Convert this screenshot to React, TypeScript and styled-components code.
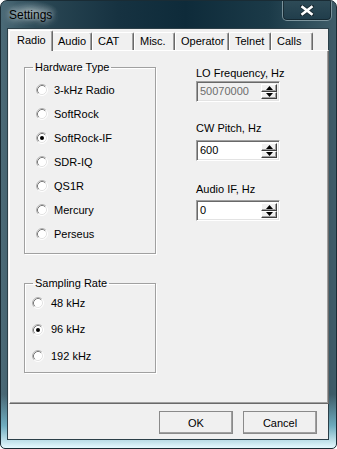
import { createGlobalStyle, styled } from "styled-components";

const GlobalStyle = createGlobalStyle`
  html, body {
    margin: 0;
    padding: 0;
    background: #ffffff;
  }
  * {
    box-sizing: border-box;
  }
`;

const Window = styled.div`
  width: 337px;
  height: 449px;
  display: flex;
  flex-direction: column;
  border: 1px solid #1a2c35;
  border-radius: 7px 7px 5px 5px;
  overflow: hidden;
  background:
    linear-gradient(
      to bottom,
      rgba(0, 0, 0, 0) 0%,
      rgba(0, 0, 0, 0) 88%,
      rgba(120, 190, 210, 0.8) 95%,
      rgba(230, 250, 255, 1) 100%
    ),
    linear-gradient(
      to right,
      #4b6a77 0%,
      #2a4754 12%,
      #163241 35%,
      #0e2b3a 55%,
      #1b3a48 80%,
      #3f5d69 100%
    );
`;

const TitleBar = styled.div`
  height: 27px;
  display: flex;
  align-items: flex-start;
  padding-left: 7px;
  padding-right: 4px;
`;

const Title = styled.div`
  padding-top: 7px;
  font-family: "Liberation Sans", Arial, sans-serif;
  font-size: 12px;
  line-height: 14px;
  color: #000;
  text-shadow:
    0 0 6px rgba(255, 255, 255, 0.8),
    0 0 10px rgba(255, 255, 255, 0.5);
  background: radial-gradient(
    ellipse at center,
    rgba(200, 215, 220, 0.45) 0%,
    rgba(200, 215, 220, 0) 70%
  );
  padding-left: 1px;
  padding-right: 6px;
`;

const CloseButton = styled.div`
  margin-left: auto;
  margin-top: -2px;
  width: 50px;
  height: 22px;
  display: flex;
  align-items: center;
  justify-content: center;
  padding-top: 2px;
  border: 1px solid rgba(190, 210, 215, 0.55);
  border-top: none;
  border-radius: 0 0 5px 5px;
  box-shadow: inset 0 0 0 1px rgba(0, 0, 0, 0.35);
  background: linear-gradient(to bottom, #2f4c58, #203d4b);
`;

const Client = styled.div`
  flex: 1;
  margin: 0 7px 8px 6px;
  background: #f0f0f0;
  border: 1px solid #2b3f48;
  display: flex;
  flex-direction: column;
`;

const TabControl = styled.div`
  margin: 0 0 0 1px;
  display: flex;
  flex-direction: column;
`;

const TabStrip = styled.div`
  height: 21px;
  display: flex;
  align-items: flex-end;
  padding-left: 1px;
  position: relative;
  z-index: 1;
`;

const Tab = styled.div<{ $w: number; $selected?: boolean }>`
  width: ${(p) => p.$w}px;
  height: ${(p) => (p.$selected ? 21 : 18)}px;
  margin-left: ${(p) => (p.$selected ? -1 : 0)}px;
  margin-right: ${(p) => (p.$selected ? -1 : 0)}px;
  margin-bottom: ${(p) => (p.$selected ? -1 : 0)}px;
  padding: ${(p) => (p.$selected ? "3px 0 0 7px" : "2px 0 0 5px")};
  font-family: "Liberation Sans", Arial, sans-serif;
  font-size: 11px;
  line-height: 13px;
  color: #000;
  background: #f0f0f0;
  border-top: 1px solid #ffffff;
  border-left: 1px solid #ffffff;
  border-right: 1px solid #696969;
  box-shadow: inset -1px 0 0 #a0a0a0;
  border-radius: 2px 2px 0 0;
  position: relative;
  z-index: ${(p) => (p.$selected ? 2 : 1)};
`;

const TabPage = styled.div`
  height: 354px;
  margin-right: -1px;
  background: #f0f0f0;
  border-top: 1px solid #ffffff;
  border-left: 1px solid #ffffff;
  border-right: 1px solid #696969;
  border-bottom: 1px solid #696969;
  box-shadow: inset -1px -1px 0 #a0a0a0;
  display: flex;
  padding: 10px 0 0 14px;
  gap: 40px;
`;

const LeftColumn = styled.div`
  width: 132px;
  display: flex;
  flex-direction: column;
  gap: 23px;
`;

const Group = styled.fieldset<{ $h: number }>`
  margin: 0;
  height: ${(p) => p.$h}px;
  padding: 0;
  border: 1px solid #a0a0a0;
  box-shadow: 1px 1px 0 #ffffff, inset 1px 1px 0 #ffffff;
`;

const Legend = styled.legend`
  margin-left: 8px;
  padding: 0 2px;
  font-family: "Liberation Sans", Arial, sans-serif;
  font-size: 11px;
  line-height: 13px;
  color: #000;
`;

const RadioList = styled.div<{ $pad: string }>`
  display: flex;
  flex-direction: column;
  padding: ${(p) => p.$pad};
`;

const RadioRow = styled.label<{ $h: number; $gap: number }>`
  height: ${(p) => p.$h}px;
  display: flex;
  align-items: center;
  gap: ${(p) => p.$gap}px;
  font-family: "Liberation Sans", Arial, sans-serif;
  font-size: 11px;
  line-height: 13px;
  color: #000;
`;

const RightColumn = styled.div`
  padding-top: 6px;
  display: flex;
  flex-direction: column;
`;

const Field = styled.div<{ $top: number; $gap: number }>`
  margin-top: ${(p) => p.$top}px;
  display: flex;
  flex-direction: column;
  gap: ${(p) => p.$gap}px;
`;

const FieldLabel = styled.div`
  font-family: "Liberation Sans", Arial, sans-serif;
  font-size: 11px;
  line-height: 13px;
  color: #000;
`;

const SpinBox = styled.div<{ $disabled?: boolean }>`
  width: 84px;
  height: 21px;
  display: flex;
  align-items: stretch;
  border: 1px solid;
  border-color: #a0a0a0 #ffffff #ffffff #a0a0a0;
  box-shadow:
    inset 1px 1px 0 #696969,
    inset -1px -1px 0 #e3e3e3;
  background: ${(p) => (p.$disabled ? "#f0f0f0" : "#ffffff")};
  padding: 2px;
`;

const SpinText = styled.div<{ $disabled?: boolean }>`
  flex: 1;
  font-family: "Liberation Sans", Arial, sans-serif;
  font-size: 11px;
  line-height: 15px;
  color: ${(p) => (p.$disabled ? "#6d6d6d" : "#000")};
  padding-left: 1px;
`;

const Spinner = styled.div`
  width: 16px;
  display: flex;
  flex-direction: column;
`;

const SpinButton = styled.div`
  flex: 1;
  display: flex;
  align-items: center;
  justify-content: center;
  background: #f0f0f0;
  border: 1px solid;
  border-color: #ffffff #404040 #404040 #ffffff;
  box-shadow: inset -1px -1px 0 #a0a0a0;
`;

const Footer = styled.div`
  display: flex;
  justify-content: flex-end;
  gap: 10px;
  padding: 7px 11px 0 0;
`;

const Button = styled.button<{ $w: number }>`
  width: ${(p) => p.$w}px;
  height: 23px;
  padding: 0;
  background: #f0f0f0;
  border: 1px solid;
  border-color: #ffffff #404040 #404040 #ffffff;
  box-shadow: inset -1px -1px 0 #a0a0a0;
  outline: 1px solid #8a8a8a;
  outline-offset: -1px;
  font-family: "Liberation Sans", Arial, sans-serif;
  font-size: 11px;
  color: #000;
`;

const RadioMark = ({ checked }: { checked?: boolean }) => (
  <svg width="12" height="12" viewBox="0 0 12 12">
    <circle cx="6" cy="6" r="5" fill="#ffffff" />
    <path d="M2.11 9.89 A5.5 5.5 0 0 1 9.89 2.11" fill="none" stroke="#b4b4b4" />
    <path d="M9.89 2.11 A5.5 5.5 0 0 1 2.11 9.89" fill="none" stroke="#ffffff" />
    <path d="M2.82 9.18 A4.5 4.5 0 0 1 9.18 2.82" fill="none" stroke="#7a7a7a" />
    <path d="M9.18 2.82 A4.5 4.5 0 0 1 2.82 9.18" fill="none" stroke="#e3e3e3" />
    {checked && <circle cx="6" cy="6" r="2" fill="#000" />}
  </svg>
);

const Arrow = ({ up }: { up?: boolean }) => (
  <svg width="7" height="4" viewBox="0 0 7 4">
    <path d={up ? "M0 4 L3.5 0 L7 4 Z" : "M0 0 L3.5 4 L7 0 Z"} fill="#000" />
  </svg>
);

const CloseGlyph = () => (
  <svg width="14" height="11" viewBox="0 0 14 11">
    <path
      d="M2 1.5 L12 9.5 M12 1.5 L2 9.5"
      stroke="#1a2a32"
      strokeWidth="4.2"
      strokeLinecap="square"
    />
    <path
      d="M2.5 2 L11.5 9 M11.5 2 L2.5 9"
      stroke="#ffffff"
      strokeWidth="2.6"
      strokeLinecap="square"
    />
  </svg>
);

const tabs = [
  { name: "Radio", w: 44 },
  { name: "Audio", w: 40 },
  { name: "CAT", w: 42 },
  { name: "Misc.", w: 41 },
  { name: "Operator", w: 54 },
  { name: "Telnet", w: 42 },
  { name: "Calls", w: 42 },
];

const hardware = [
  "3-kHz Radio",
  "SoftRock",
  "SoftRock-IF",
  "SDR-IQ",
  "QS1R",
  "Mercury",
  "Perseus",
];

const rates = ["48 kHz", "96 kHz", "192 kHz"];

const fields = [
  { label: "LO Frequency, Hz", value: "50070000", disabled: true, top: 0, gap: 1 },
  { label: "CW Pitch, Hz", value: "600", top: 20, gap: 5 },
  { label: "Audio IF, Hz", value: "0", top: 22, gap: 4 },
];

const App = () => {
  return (
    <Window>
      <GlobalStyle />
      <TitleBar>
        <Title>Settings</Title>
        <CloseButton>
          <CloseGlyph />
        </CloseButton>
      </TitleBar>
      <Client>
        <TabControl>
          <TabStrip>
            {tabs.map((t, i) => (
              <Tab key={t.name} $w={t.w} $selected={i === 0}>
                {t.name}
              </Tab>
            ))}
          </TabStrip>
          <TabPage>
            <LeftColumn>
              <Group $h={193}>
                <Legend>Hardware Type</Legend>
                <RadioList $pad="4px 0 0 11px">
                  {hardware.map((h) => (
                    <RadioRow key={h} $h={24} $gap={6}>
                      <RadioMark checked={h === "SoftRock-IF"} />
                      {h}
                    </RadioRow>
                  ))}
                </RadioList>
              </Group>
              <Group $h={96}>
                <Legend>Sampling Rate</Legend>
                <RadioList $pad="0 0 0 7px">
                  {rates.map((r) => (
                    <RadioRow key={r} $h={26.5} $gap={7}>
                      <RadioMark checked={r === "96 kHz"} />
                      {r}
                    </RadioRow>
                  ))}
                </RadioList>
              </Group>
            </LeftColumn>
            <RightColumn>
              {fields.map((f) => (
                <Field key={f.label} $top={f.top} $gap={f.gap}>
                  <FieldLabel>{f.label}</FieldLabel>
                  <SpinBox $disabled={f.disabled}>
                    <SpinText $disabled={f.disabled}>{f.value}</SpinText>
                    <Spinner>
                      <SpinButton>
                        <Arrow up />
                      </SpinButton>
                      <SpinButton>
                        <Arrow />
                      </SpinButton>
                    </Spinner>
                  </SpinBox>
                </Field>
              ))}
            </RightColumn>
          </TabPage>
        </TabControl>
        <Footer>
          <Button $w={74}>OK</Button>
          <Button $w={74}>Cancel</Button>
        </Footer>
      </Client>
    </Window>
  );
};

export default App;
